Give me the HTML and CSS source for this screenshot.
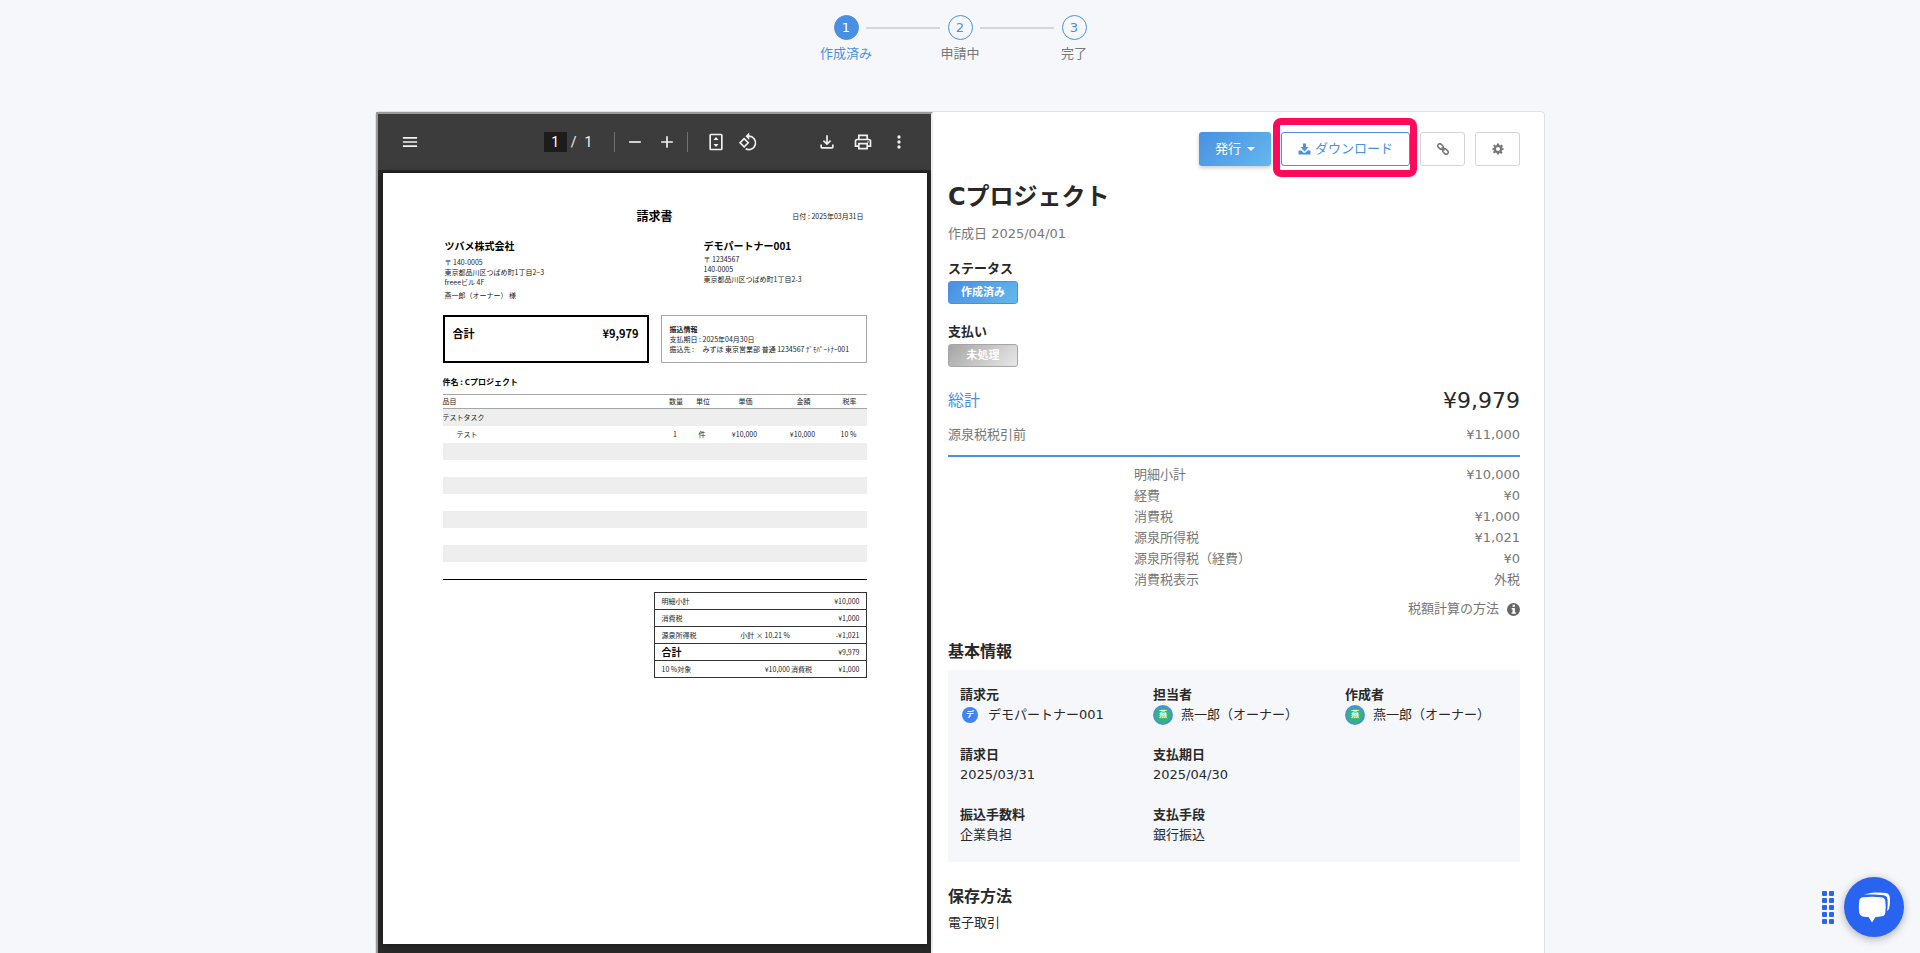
FILE: index.html
```html
<!DOCTYPE html>
<html lang="ja">
<head>
  <meta charset="UTF-8" />
  <meta name="viewport" content="width=device-width, initial-scale=1" />
  <title>Cプロジェクト</title>
  <link rel="stylesheet" href="styles.css">
</head>
<body>
  <ol class="steps">
    <li class="step active"><span class="step-num">1</span>作成済み</li>
    <li class="step"><span class="step-num">2</span>申請中</li>
    <li class="step"><span class="step-num">3</span>完了</li>
  </ol>

  <main class="card">
    <!-- PDF preview -->
    <section class="viewer">
      <div class="toolbar">
        <button class="tool" aria-label="メニュー"><svg viewBox="0 0 24 24"><path d="M3.500 6h17v2h-17zM3.500 11h17v2h-17zM3.500 16h17v2h-17z"/></svg></button>
        <div class="tool-group center">
          <input class="page-input" type="text" value="1" aria-label="ページ">
          <span class="page-slash">/</span>
          <span class="page-total">1</span>
          <span class="divider"></span>
          <button class="tool" aria-label="縮小"><svg viewBox="0 0 24 24"><path d="M5 11h14v2H5z"/></svg></button>
          <button class="tool" aria-label="拡大"><svg viewBox="0 0 24 24"><path d="M19 13h-6v6h-2v-6H5v-2h6V5h2v6h6z"/></svg></button>
          <span class="divider"></span>
          <button class="tool fit" aria-label="ページに合わせる"><svg viewBox="0 0 24 24"><g fill="none" stroke="#f1f1f1" stroke-width="2"><rect x="5" y="3" width="14" height="18" rx="1"/></g><path d="M12 6l-3 3.500h6zM12 18l-3-3.500h6z"/></svg></button>
          <button class="tool" aria-label="回転"><svg viewBox="0 0 24 24"><g fill="none" stroke="#f1f1f1" stroke-width="2"><path d="M7.400 8L2.500 12.900l4.900 4.900 4.900-4.900z"/><path d="M11.500 5H13a8 8 0 1 1-3.800 15"/></g><path d="M13.500.500v9L9 5z"/></svg></button>
        </div>
        <div class="tool-group right">
          <button class="tool" aria-label="保存"><svg viewBox="0 0 24 24"><path d="M11 4h2v8.200l2.600-2.600L17 11l-5 5-5-5 1.400-1.400 2.600 2.600zM4 15h2v3h12v-3h2v3c0 1.100-.900 2-2 2H6c-1.100 0-2-.900-2-2z"/></svg></button>
          <button class="tool" aria-label="印刷"><svg viewBox="0 0 24 24"><g fill="none" stroke="#f1f1f1" stroke-width="2"><path d="M7 8V4h10v4M6 17H3v-6c0-1 1-2 2-2h14c1 0 2 1 2 2v6h-3"/><path d="M7 14h10v6H7z"/></g><circle cx="18" cy="12" r="1"/></svg></button>
          <button class="tool" aria-label="その他"><svg viewBox="0 0 24 24"><circle cx="12" cy="6" r="2"/><circle cx="12" cy="12" r="2"/><circle cx="12" cy="18" r="2"/></svg></button>
        </div>
      </div>

      <article class="sheet">
        <header class="sheet-head">
          <h2>請求書</h2>
          <p>日付 : 2025年03月31日</p>
        </header>

        <div class="parties">
          <div class="party">
            <h3>ツバメ株式会社</h3>
            <p>〒 140-0005</p>
            <p>東京都品川区つばめ町1丁目2−3</p>
            <p>freeeビル 4F</p>
            <p class="attn">燕一郎（オーナー） 様</p>
          </div>
          <div class="party sender">
            <h3>デモパートナー001</h3>
            <p>〒 1234567</p>
            <p>140-0005</p>
            <p>東京都品川区つばめ町1丁目2-3</p>
          </div>
        </div>

        <div class="boxes">
          <div class="total-box"><span>合計</span><span>¥9,979</span></div>
          <div class="bank-box">
            <h4>振込情報</h4>
            <dl>
              <dt>支払期日 :</dt><dd>2025年04月30日</dd>
              <dt>振込先 :</dt><dd>みずほ 東京営業部 普通 1234567 ﾃﾞﾓﾊﾟｰﾄﾅｰ001</dd>
            </dl>
          </div>
        </div>

        <h4 class="subject">件名 : Cプロジェクト</h4>
        <table class="items">
          <thead>
            <tr><th class="name">品目</th><th class="qty">数量</th><th class="unit">単位</th><th class="price">単価</th><th class="amount">金額</th><th class="rate">税率</th></tr>
          </thead>
          <tbody>
            <tr><td class="name" colspan="6">テストタスク</td></tr>
            <tr><td class="name sub">テスト</td><td>1</td><td>件</td><td>¥10,000</td><td>¥10,000</td><td>10 %</td></tr>
            <tr><td colspan="6"></td></tr>
            <tr><td colspan="6"></td></tr>
            <tr><td colspan="6"></td></tr>
            <tr><td colspan="6"></td></tr>
            <tr><td colspan="6"></td></tr>
            <tr><td colspan="6"></td></tr>
            <tr><td colspan="6"></td></tr>
            <tr><td colspan="6"></td></tr>
          </tbody>
        </table>

        <table class="summary">
          <tr><th>明細小計</th><td class="calc"></td><td class="note"></td><td>¥10,000</td></tr>
          <tr><th>消費税</th><td class="calc"></td><td class="note"></td><td>¥1,000</td></tr>
          <tr><th>源泉所得税</th><td class="calc">小計 × 10.21 %</td><td class="note"></td><td>-¥1,021</td></tr>
          <tr><th class="grand">合計</th><td class="calc"></td><td class="note"></td><td>¥9,979</td></tr>
          <tr><th>10 %対象</th><td class="calc">¥10,000</td><td class="note">消費税</td><td>¥1,000</td></tr>
        </table>
      </article>
    </section>

    <!-- Invoice details -->
    <section class="detail">
      <div class="actions">
        <button class="btn btn-primary">発行<span class="caret"></span></button>
        <div class="spotlight">
          <button class="btn btn-outline">
            <svg class="icon-dl" viewBox="0 0 26 24"><path d="M10 1h6v7h5l-8 9-8-9h5zM1 15h6l3 3.500c1.500 1.500 4.500 1.500 6 0L19 15h6v8H1z"/></svg>ダウンロード
          </button>
        </div>
        <button class="btn btn-icon" aria-label="リンク"><svg viewBox="0 0 24 24"><g fill="none" stroke="#777" stroke-width="3" transform="rotate(45 12 12)"><rect x="-1" y="8" width="12" height="8" rx="4"/><rect x="13" y="8" width="12" height="8" rx="4"/><path d="M8 12h8"/></g></svg></button>
        <button class="btn btn-icon" aria-label="設定"><svg viewBox="0 0 24 24"><path fill="#777" fill-rule="evenodd" d="M10 1h4l.600 3.200 2 .800 2.700-1.800 2.700 2.700-1.800 2.700.800 2L23 10v4l-3 .600-.800 2 1.800 2.700-2.700 2.700-2.700-1.800-2 .800L14 23h-4l-.600-3-2-.800L4.700 21 2 18.300l1.800-2.700-.800-2L1 14v-4l3-.600.800-2L2 5.900l2.700-2.700L7.400 5l2-.800zM12 8a4 4 0 1 0 0 8 4 4 0 0 0 0-8z"/></svg></button>
      </div>

      <h1>Cプロジェクト</h1>
      <p class="created">作成日 2025/04/01</p>

      <h5>ステータス</h5>
      <span class="badge badge-blue">作成済み</span>
      <h5>支払い</h5>
      <span class="badge badge-gray">未処理</span>

      <div class="grand-total"><span class="label">総計</span><span class="value">¥9,979</span></div>
      <div class="before-tax"><span>源泉税税引前</span><span>¥11,000</span></div>

      <table class="breakdown">
        <tr><th>明細小計</th><td>¥10,000</td></tr>
        <tr><th>経費</th><td>¥0</td></tr>
        <tr><th>消費税</th><td>¥1,000</td></tr>
        <tr><th>源泉所得税</th><td>¥1,021</td></tr>
        <tr><th>源泉所得税（経費）</th><td>¥0</td></tr>
        <tr><th>消費税表示</th><td>外税</td></tr>
      </table>
      <p class="tax-help">税額計算の方法
        <svg viewBox="0 0 14 14"><circle cx="7" cy="7" r="7" fill="#666"/><path fill="#fff" d="M6 2h2.500v2H6zM5 5.500h3.500v4.500h1V11.500H5V10h1V7H5z"/></svg>
      </p>

      <h3 class="section-title">基本情報</h3>
      <dl class="info">
        <div><dt>請求元</dt><dd><span class="avatar company">デ</span>デモパートナー001</dd></div>
        <div><dt>担当者</dt><dd><span class="avatar">燕</span>燕一郎（オーナー）</dd></div>
        <div><dt>作成者</dt><dd><span class="avatar">燕</span>燕一郎（オーナー）</dd></div>
        <div><dt>請求日</dt><dd>2025/03/31</dd></div>
        <div class="wide"><dt>支払期日</dt><dd>2025/04/30</dd></div>
        <div><dt>振込手数料</dt><dd>企業負担</dd></div>
        <div class="wide"><dt>支払手段</dt><dd>銀行振込</dd></div>
      </dl>

      <h3 class="section-title storage">保存方法</h3>
      <p class="storage-value">電子取引</p>
    </section>
  </main>

  <div class="chat">
    <svg class="grip" viewBox="0 0 12 33"><g fill="#2864f0"><rect width="5" height="5" rx="1"/><rect x="7" width="5" height="5" rx="1"/><rect y="7" width="5" height="5" rx="1"/><rect x="7" y="7" width="5" height="5" rx="1"/><rect y="14" width="5" height="5" rx="1"/><rect x="7" y="14" width="5" height="5" rx="1"/><rect y="21" width="5" height="5" rx="1"/><rect x="7" y="21" width="5" height="5" rx="1"/><rect y="28" width="5" height="5" rx="1"/><rect x="7" y="28" width="5" height="5" rx="1"/></g></svg>
    <button class="chat-btn" aria-label="チャット">
      <svg viewBox="0 0 60 60"><path fill="#fff" d="M20 17.500C27 15 36 15 42 16c2.500.500 3.500 2 3.800 4 .500 4 .200 8-.800 11.500-.300 1-1 2-2 2.500.800-4 .800-8 .500-11.500-.300-2.500-1.500-3.800-4-4.200-6-1-13-1-19.500-.800z"/><path fill="#fff" d="M18.500 20.300c6-.800 13-.800 19 0 2.500.300 3.500 1.500 3.800 3.700.500 4 .500 8 0 12-.300 2-1.500 3-3.500 3.300-2 .300-4 .500-6.300.600L28 45.500 24.500 40c-2-.100-4-.300-5.500-.600-2.200-.400-3.300-1.400-3.700-3.400-.600-4-.600-8 0-12 .300-2.200 1.200-3.400 3.200-3.700z"/></svg>
    </button>
  </div>
</body>
</html>
```
FILE: styles.css
```css
* {
  box-sizing: border-box;
}
body {
  margin: 0;
  height: 100vh;
  overflow: hidden;
  background: #f6f7fb;
  color: #282828;
  font-family: "DejaVu Sans", "Noto Sans CJK JP", sans-serif;
  font-size: 13px;
  line-height: 20px;
}
h1, h2, h3, h4, h5, p, ol, dl, dd {
  margin: 0;
  padding: 0;
}
button {
  font: inherit;
  cursor: pointer;
}

/* steps */
.steps {
  display: flex;
  justify-content: center;
  height: 111px;
  padding-top: 15px;
  list-style: none;
}
.step {
  position: relative;
  display: flex;
  flex-direction: column;
  align-items: center;
  gap: 4px;
  width: 114px;
  color: #777;
}
.step-num {
  width: 25px;
  height: 25px;
  border: 1px solid #4a90e2;
  border-radius: 50%;
  color: #4a90e2;
  line-height: 23px;
  text-align: center;
}
.step.active {
  color: #4a90e2;
}
.step.active .step-num {
  background: #4a90e2;
  color: #fff;
}
.step + .step::before {
  content: "";
  position: absolute;
  top: 12px;
  left: -37px;
  width: 74px;
  height: 2px;
  background: #d5d6d9;
}

.card {
  display: flex;
  max-width: 1170px;
  min-height: 1000px;
  margin: 0 auto;
  background: #fff;
  border: 1px solid #dfe0e3;
  border-radius: 4px;
}

/* pdf viewer */
.viewer {
  flex: 0 0 557px;
  border: 2px solid;
  border-color: #9a9a9a #eee #eee #9a9a9a;
  background: #282828;
}
.toolbar {
  display: flex;
  align-items: center;
  justify-content: space-between;
  height: 56px;
  padding: 0 22px;
  background: #3c3c3c;
  color: #f1f1f1;
  font-family: Roboto, sans-serif;
  font-size: 14px;
}
.tool-group {
  display: flex;
  align-items: center;
}
.tool-group.center {
  margin-left: 65px;
}
.tool-group.right {
  gap: 16px;
}
.tool {
  width: 20px;
  height: 20px;
  padding: 0;
  border: 0;
  background: none;
}
.tool svg {
  display: block;
  width: 20px;
  height: 20px;
  fill: #f1f1f1;
}
.page-input {
  width: 23px;
  height: 20px;
  padding: 0;
  border: 0;
  background: #1c1c1c;
  color: #fff;
  font: inherit;
  text-align: center;
}
.page-slash {
  margin: 0 8px 0 4px;
}
.divider {
  width: 1px;
  height: 20px;
  margin-left: 22px;
  background: #707070;
}
.tool-group.center .tool {
  margin-left: 12px;
}
.tool-group.center .divider + .tool {
  margin-left: 10px;
}
.tool-group.center .tool + .divider {
  margin-left: 10px;
}
.tool-group.center .divider + .tool.fit {
  margin-left: 18px;
}

.sheet {
  width: 544px;
  height: 771px;
  margin: 3px auto 0;
  padding: 34px 60px 0;
  background: #fff;
  box-shadow: 0 0 6px rgba(0, 0, 0, 0.5);
  color: #222;
  font-family: "Noto Sans CJK JP", sans-serif;
  font-size: 7px;
  line-height: 10px;
}
.sheet-head {
  display: grid;
  grid-template-columns: 1fr auto 1fr;
  align-items: center;
}
.sheet-head h2 {
  grid-column: 2;
  color: #000;
  font-size: 12px;
  line-height: 18px;
}
.sheet-head p {
  padding-right: 3px;
  text-align: right;
}
.parties {
  display: grid;
  grid-template-columns: 261px 1fr;
  height: 62px;
  margin-top: 14px;
}
.party {
  padding-left: 2px;
}
.party h3 {
  margin-bottom: 4px;
  color: #000;
  font-size: 10px;
  line-height: 14px;
}
.party.sender {
  padding-left: 0;
}
.party.sender h3 {
  margin-bottom: 1px;
}
.party .attn {
  margin-top: 3px;
}
.boxes {
  display: grid;
  grid-template-columns: 1fr 1fr;
  gap: 12px;
  height: 47px;
  margin-top: 14px;
}
.total-box {
  display: flex;
  justify-content: space-between;
  padding: 8px;
  border: 2px solid #000;
  color: #000;
  font-size: 11px;
  font-weight: bold;
  line-height: 16px;
}
.bank-box {
  padding: 8px;
  border: 1px solid #a5a5a5;
  white-space: nowrap;
}
.bank-box h4 {
  font-size: 7px;
}
.bank-box dl {
  display: grid;
  grid-template-columns: 33px 1fr;
}
.subject {
  margin-top: 14px;
  color: #000;
  font-size: 8px;
  line-height: 12px;
}
.items {
  width: 100%;
  margin-top: 6px;
  border-spacing: 0;
  border-bottom: 1px solid #000;
  table-layout: fixed;
}
.items th, .items td {
  padding: 0 0 2px;
  text-align: center;
  font-weight: normal;
}
.items th {
  height: 15px;
  border: solid #a5a5a5;
  border-width: 1px 0;
}
.items td {
  height: 17px;
  padding-right: 2px;
}
.items tr:nth-child(odd) td {
  background: #eee;
}
.items .name {
  text-align: left;
}
.items .sub {
  padding-left: 14px;
}
.items .qty, .items .unit {
  width: 27px;
}
.items .price, .items .amount {
  width: 58px;
}
.items .rate {
  width: 34px;
}
.summary {
  width: 213px;
  margin: 12px 0 0 auto;
  border: 1px solid #333;
  border-collapse: collapse;
  table-layout: fixed;
}
.summary th, .summary td {
  height: 17px;
  padding: 0;
  border-bottom: 1px solid #333;
  font-weight: normal;
}
.summary th {
  width: 58px;
  padding-left: 7px;
  text-align: left;
}
.summary td {
  padding-right: 6px;
  text-align: right;
}
.summary td.calc {
  width: 78px;
  padding: 0;
}
.summary td.note {
  width: 28px;
  padding: 0 0 0 1px;
  text-align: left;
}
.summary .grand {
  color: #000;
  font-size: 10px;
  font-weight: bold;
}

/* detail column */
.detail {
  flex: 1;
  padding: 20px 24px 20px 15px;
}
.actions {
  display: flex;
  justify-content: flex-end;
  gap: 10px;
}
.btn {
  display: flex;
  align-items: center;
  justify-content: center;
  height: 34px;
  padding: 0 16px;
  border: 1px solid #d5d5d5;
  border-radius: 3px;
  background: #fff;
}
.btn-primary {
  border: 0;
  background: linear-gradient(135deg, #4a90e2, #63b8ee);
  box-shadow: 0 2px 4px rgba(0, 0, 0, 0.2);
  color: #fff;
}
.caret {
  margin-left: 6px;
  border: 4px solid transparent;
  border-top-color: #fff;
  border-bottom: 0;
}
.spotlight {
  position: relative;
}
.spotlight::after {
  content: "";
  position: absolute;
  inset: -14px -7px -11px -8px;
  border: 7px solid #ff0a5a;
  border-radius: 8px;
  pointer-events: none;
}
.btn-outline {
  border-color: #4a90e2;
  color: #4a90e2;
}
.icon-dl {
  width: 13px;
  height: 12px;
  margin-right: 4px;
  fill: #4a90e2;
}
.btn-icon {
  width: 45px;
}
.btn-icon svg {
  flex: none;
  width: 12px;
  height: 12px;
}
h1 {
  margin-top: 16px;
  font-size: 24px;
  line-height: 30px;
}
.created {
  margin-top: 12px;
  color: #777;
}
h5 {
  margin-top: 15px;
  font-size: 13px;
}
.badge {
  display: block;
  width: 70px;
  height: 23px;
  margin: 2px 0 18px;
  border: 1px solid #4a90e2;
  border-radius: 3px;
  color: #fff;
  font-size: 11px;
  font-weight: bold;
  line-height: 21px;
  text-align: center;
}
.badge-blue {
  background: linear-gradient(135deg, #4a90e2, #63b8ee);
}
.badge-gray {
  border-color: #a5a5a5;
  background: linear-gradient(135deg, #a5a5a5, #e8e8e8);
}
.grand-total, .before-tax {
  display: flex;
  justify-content: space-between;
}
.grand-total {
  margin-top: 19px;
  line-height: 30px;
}
.grand-total .label {
  color: #4a90e2;
  font-size: 16px;
}
.grand-total .value {
  font-size: 22px;
}
.before-tax {
  margin-top: 9px;
  padding-bottom: 10px;
  border-bottom: 2px solid #4a90e2;
  color: #777;
}
.breakdown {
  width: 386px;
  margin: 7px 0 0 auto;
  border-spacing: 0;
  color: #777;
  line-height: 21px;
}
.breakdown th, .breakdown td {
  padding: 0;
  font-weight: normal;
  text-align: left;
}
.breakdown td {
  text-align: right;
}
.tax-help {
  display: flex;
  align-items: center;
  justify-content: flex-end;
  gap: 8px;
  margin-top: 9px;
  color: #777;
}
.tax-help svg {
  width: 13px;
  height: 13px;
}
.section-title {
  margin-top: 21px;
  font-size: 16px;
  line-height: 24px;
}
.info {
  display: grid;
  grid-template-columns: 193px 192px 1fr;
  row-gap: 20px;
  margin-top: 6px;
  padding: 15px 0 17px 12px;
  background: #f5f7fb;
}
.info .wide {
  grid-column: span 2;
}
.info dt {
  font-weight: bold;
}
.info dd {
  display: flex;
  align-items: center;
  white-space: nowrap;
}
.avatar {
  width: 20px;
  height: 20px;
  margin-right: 8px;
  border: 2px solid #4a90e2;
  border-radius: 50%;
  background: #34b37a;
  color: #fff;
  font-size: 8px;
  font-weight: bold;
  line-height: 16px;
  text-align: center;
}
.avatar.company {
  width: 16px;
  height: 16px;
  margin: 0 10px 0 2px;
  border: 0;
  background: #3f83f5;
}
.section-title.storage {
  margin-top: 23px;
}
.storage-value {
  margin-top: 4px;
}

/* chat launcher */
.chat {
  position: fixed;
  right: 16px;
  bottom: 16px;
  display: flex;
  align-items: center;
  gap: 10px;
}
.grip {
  width: 12px;
  height: 33px;
}
.chat-btn {
  width: 60px;
  height: 60px;
  padding: 0;
  border: 0;
  border-radius: 50%;
  background: #2864f0;
  box-shadow: 0 2px 8px rgba(0, 0, 0, 0.3);
}
.chat-btn svg {
  display: block;
}
```
